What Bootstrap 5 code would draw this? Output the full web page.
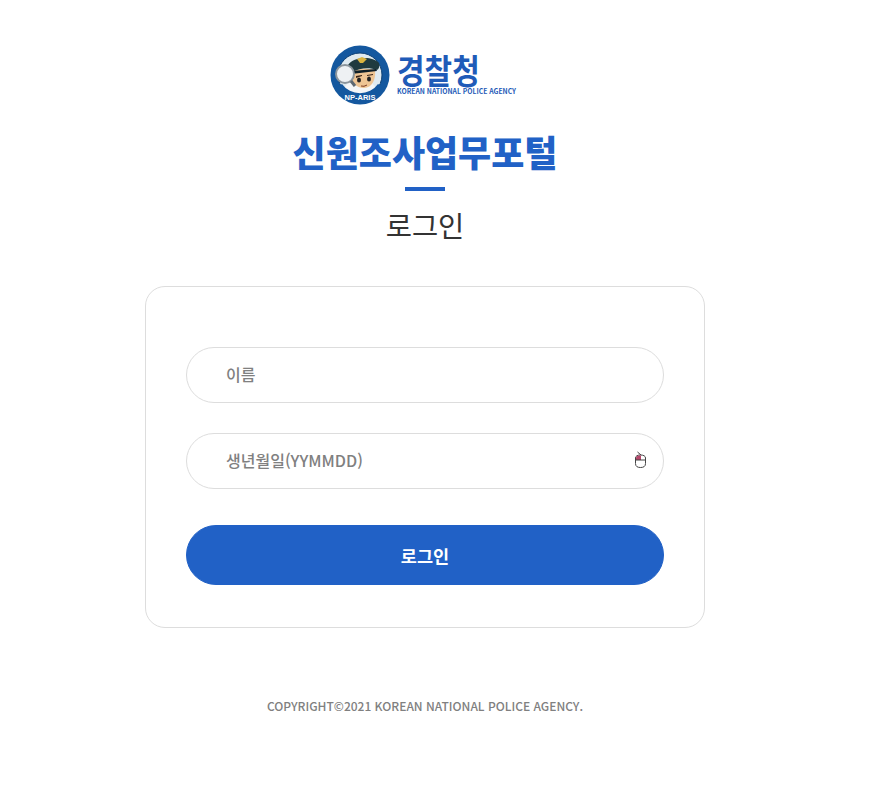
<!DOCTYPE html>
<html lang="ko">
<head>
  <meta charset="UTF-8">
  <meta name="viewport" content="width=device-width, initial-scale=1.0">
  <title>신원조사업무포털 로그인</title>
  <link href="https://cdn.jsdelivr.net/npm/bootstrap@5.3.0/dist/css/bootstrap.min.css" rel="stylesheet">
  <style>
    body {
      font-family: "Noto Sans CJK KR", "Noto Sans", sans-serif;
      color: #333;
      background: #fff;
    }
    .page-area { width: 850px; }
    .login-wrap { width: 560px; padding-top: 45px; }
    .logo-row { height: 60px; gap: 7px; padding-right: 4px; }
    .logo-name { font-size: 30px; font-weight: 700; line-height: 32px; color: #1f5bb8; transform: scaleY(1.12); margin-top: -1px; }
    .logo-eng { font-size: 6.8px; font-weight: 700; line-height: 9px; margin-top: 2px; color: #1f5bb8; white-space: nowrap; }
    .portal-title { font-size: 36px; font-weight: 900; line-height: 52px; color: #2161c6; margin: 20px 0 0; }
    .title-bar { width: 40px; height: 4px; background: #2161c6; margin: 10px auto 0; }
    .page-title { font-size: 28.5px; font-weight: 400; line-height: 40px; color: #333; margin: 14px 0 0; }
    .login-box { margin-top: 41px; height: 342px; padding: 60px 40px 0; border: 1px solid #ddd; border-radius: 20px; }
    .login-box .form-control {
      height: 56px; padding: 0 39px 2px; border-color: #ddd; border-radius: 28px;
      font-size: 16px; font-weight: 500; color: #333; box-shadow: none;
    }
    .login-box .form-control::placeholder { color: #808080; }
    .field-gap { margin-bottom: 30px; }
    .field-last { margin-bottom: 36px; }
    .cursor-icon { position: absolute; left: 447px; top: 16px; }
    .login-btn {
      height: 60px; padding-top: 8px; border-radius: 30px; font-size: 17.5px; font-weight: 700;
      background: #2161c6; border-color: #2161c6;
    }
    .copy-line { margin-top: 68px; font-size: 12px; line-height: 20px; font-weight: 500; color: #808080; }
  </style>
</head>
<body>

<div class="page-area">
<div class="login-wrap mx-auto text-center">
  <!-- Logo -->
  <div class="logo-row d-flex justify-content-center align-items-center">
    <svg width="60" height="60" viewBox="0 0 60 60" aria-hidden="true">
      <circle cx="30" cy="30" r="29.500" fill="#14589f"/>
      <circle cx="30" cy="30" r="22" fill="#dfeaf0" stroke="#0d3f73"/>
      <path d="M13 44c5 7 29 7 34 0l-5-6H18z" fill="#f4f6f7"/>
      <path d="M21 29c0-5 20-7 24-3 1 8-3 17-11 17-8 0-13-6-13-14z" fill="#eec594"/>
      <path d="M18 20c5-8 24-10 31-2 1 3 0 6-2 7-8-3-17-2-25 2-2-1-4-4-4-7z" fill="#1f3a3f"/>
      <path d="M27 14l5-2 5 2-4 4h-3z" fill="#d9b441"/>
      <path d="M21 26l25-2 1 2-26 3z" fill="#0e1f28"/>
      <path d="M26 31l6-1v1l-6 2zM37 30l6-1v1l-6 1z" fill="#3a2418"/>
      <ellipse cx="29" cy="35" rx="2" ry="2.500" fill="#222"/>
      <ellipse cx="39" cy="34" rx="2" ry="2.500" fill="#222"/>
      <path d="M31 41q3 1 6-1" stroke="#7c3b22" fill="none"/>
      <circle cx="15" cy="29" r="9" fill="#eef1f3" stroke="#8b959c" stroke-width="2"/>
      <path d="M21 36l4 5" stroke="#5d6870" stroke-width="3"/>
      <path d="M7 42a27 27 0 0 0 46 0l-5-3a22 22 0 0 1-36 0z" fill="#14589f"/>
      <text x="30" y="54.500" text-anchor="middle" font-size="7.500" font-weight="700" fill="#fff" font-family="Liberation Sans, sans-serif">NP-ARIS</text>
    </svg>
    <div class="text-start">
      <div class="logo-name">경찰청</div>
      <div class="logo-eng">KOREAN NATIONAL POLICE AGENCY</div>
    </div>
  </div>

  <h1 class="portal-title">신원조사업무포털</h1>
  <div class="title-bar"></div>
  <h2 class="page-title">로그인</h2>

  <!-- Login form -->
  <form class="login-box bg-white">
    <div class="field-gap">
      <input type="text" class="form-control" placeholder="이름">
    </div>
    <div class="field-last position-relative">
      <input type="text" class="form-control" placeholder="생년월일(YYMMDD)">
      <svg class="cursor-icon" width="14" height="20" viewBox="0 0 14 20" aria-hidden="true">
        <path d="M4.500 3L8 6" stroke="#444" fill="none"/>
        <path d="M2.500 9c0-2 2-3 5-3s5 1 5 3v5.500c0 3-2 4-5 4s-5-1-5-4z" fill="#fff" stroke="#444"/>
        <path d="M3 11V9c0-2 2-2.500 5-2.500V11z" fill="#b5476b"/>
        <path d="M2.500 11h10" stroke="#444"/>
      </svg>
    </div>
    <button type="button" class="btn btn-primary login-btn w-100">로그인</button>
  </form>

  <p class="copy-line">COPYRIGHT©2021 KOREAN NATIONAL POLICE AGENCY.</p>
</div>
</div>

<script src="https://cdn.jsdelivr.net/npm/bootstrap@5.3.0/dist/js/bootstrap.bundle.min.js"></script>
</body>
</html>
